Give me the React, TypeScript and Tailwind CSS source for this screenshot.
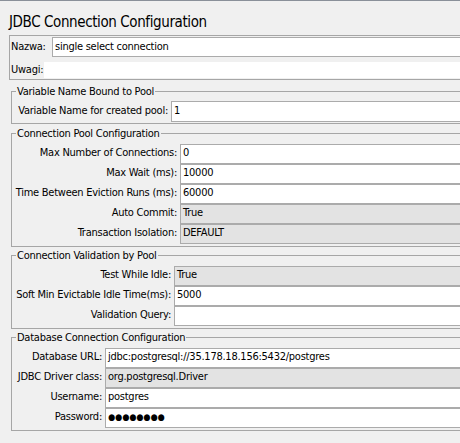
import React from 'react';

// one row of a titled group: right-aligned label + text field
interface Row {
  label: string;
  value: string;
  readOnly?: boolean;
  password?: boolean;
}

interface Group {
  title: string;
  labelCol: string; // grid template for label column
  rows: Row[];
  single?: boolean;
}

const groups: Group[] = [
  {
    title: 'Variable Name Bound to Pool',
    labelCol: 'grid-cols-[152px_1fr]',
    single: true,
    rows: [{ label: 'Variable Name for created pool:', value: '1' }],
  },
  {
    title: 'Connection Pool Configuration',
    labelCol: 'grid-cols-[161px_1fr]',
    rows: [
      { label: 'Max Number of Connections:', value: '0' },
      { label: 'Max Wait (ms):', value: '10000' },
      { label: 'Time Between Eviction Runs (ms):', value: '60000' },
      { label: 'Auto Commit:', value: 'True', readOnly: true },
      { label: 'Transaction Isolation:', value: 'DEFAULT', readOnly: true },
    ],
  },
  {
    title: 'Connection Validation by Pool',
    labelCol: 'grid-cols-[155px_1fr]',
    rows: [
      { label: 'Test While Idle:', value: 'True', readOnly: true },
      { label: 'Soft Min Evictable Idle Time(ms):', value: '5000' },
      { label: 'Validation Query:', value: '' },
    ],
  },
  {
    title: 'Database Connection Configuration',
    labelCol: 'grid-cols-[86px_1fr]',
    rows: [
      { label: 'Database URL:', value: 'jdbc:postgresql://35.178.18.156:5432/postgres' },
      { label: 'JDBC Driver class:', value: 'org.postgresql.Driver', readOnly: true },
      { label: 'Username:', value: 'postgres' },
      { label: 'Password:', value: '', password: true },
    ],
  },
];

function Field({ row, tall }: { row: Row; tall?: boolean }) {
  return (
    <div
      className={`flex items-center border border-[#ababab] pl-[2px] ${
        tall ? 'h-[21px]' : 'h-[20px]'
      } ${row.readOnly ? 'bg-[#e3e3e3]' : 'bg-white'}`}
    >
      {row.password ? (
        <span className="text-[9px] tracking-[0px] leading-none">●●●●●●●●</span>
      ) : (
        <span className="whitespace-nowrap">{row.value}</span>
      )}
    </div>
  );
}

function TitledGroup({ group, className }: { group: Group; className: string }) {
  return (
    <fieldset className={`ml-[11px] border border-[#a6a6a6] px-[4px] ${className}`}>
      <legend className="px-[1px] leading-[14px]">{group.title}</legend>
      <div className={`grid ${group.labelCol} gap-x-[3px] ${group.single ? 'pt-[2px] pb-[1px]' : 'pt-[3px] pb-[2px]'}`}>
        {group.rows.map((row) => (
          <React.Fragment key={row.label}>
            <div className="flex items-center justify-end whitespace-nowrap">{row.label}</div>
            <Field row={row} tall={group.single} />
          </React.Fragment>
        ))}
      </div>
    </fieldset>
  );
}

export default function App() {
  return (
    <div className="w-[460px] h-[443px] overflow-hidden bg-[#f0f0f0] border-t border-[#8a9099] text-black font-['DejaVu_Sans_Condensed','Liberation_Sans',sans-serif] text-[11px] tracking-[-0.25px]">
      <div className="w-[480px]">
        {/* panel title */}
        <div className="pl-[9px] pt-[12px] mb-[4px] text-[15px] leading-[18px] tracking-[-0.4px]">
          JDBC Connection Configuration
        </div>

        {/* name + comments */}
        <div className="ml-[9px] border border-[#a6a6a6] pl-[1px] pt-[1px]">
          <div className="flex items-center">
            <div className="w-[41px]">Nazwa:</div>
            <div className="flex-1 h-[20px] flex items-center border border-[#ababab] bg-white pl-[2px]">
              single select connection
            </div>
          </div>
          <div className="flex items-center mt-[5px]">
            <div className="w-[33px]">Uwagi:</div>
            <div className="flex-1 h-[16px] bg-white" />
          </div>
        </div>

        <TitledGroup group={groups[0]} className="mt-[5px]" />
        <TitledGroup group={groups[1]} className="mt-[3px]" />
        <TitledGroup group={groups[2]} className="mt-[2px]" />
        <TitledGroup group={groups[3]} className="mt-[2px]" />
      </div>
    </div>
  );
}
